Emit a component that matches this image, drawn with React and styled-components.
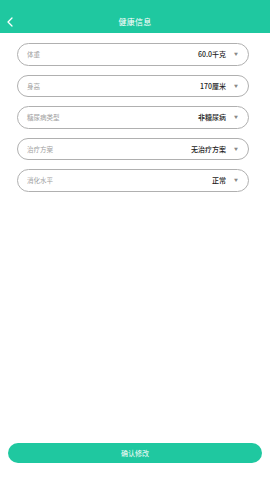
import styled, { createGlobalStyle } from "styled-components";

const fields = [
  { label: "体重", value: "60.0千克" },
  { label: "身高", value: "170厘米" },
  { label: "糖尿病类型", value: "非糖尿病" },
  { label: "治疗方案", value: "无治疗方案" },
  { label: "消化水平", value: "正常" },
];

function App() {
  return (
    <>
      <GlobalStyle />
      <Page>
        <Header>
          <Back aria-label="back">
            <svg width="8" height="10" viewBox="0 0 8 10">
              <path d="M6 1 L2 5 L6 9" fill="none" stroke="#fff" strokeWidth="1.3" strokeLinecap="round" strokeLinejoin="round" />
            </svg>
          </Back>
          <Title>健康信息</Title>
        </Header>
        <Form>
          {fields.map((f) => (
            <Field key={f.label}>
              <Label>{f.label}</Label>
              <Value>{f.value}</Value>
              <Caret>▼</Caret>
            </Field>
          ))}
        </Form>
        <Footer>
          <Submit>确认修改</Submit>
        </Footer>
      </Page>
    </>
  );
}

const GlobalStyle = createGlobalStyle`
  html, body {
    margin: 0;
    padding: 0;
    background: #fff;
    font-family: "Noto Sans CJK SC", "Noto Sans", sans-serif;
  }
`;
const Page = styled.div`
  width: 270px;
  height: 480px;
  display: flex;
  flex-direction: column;
  background: #fff;
`;
const Header = styled.div`
  height: 33px;
  background: #1fc8a0;
  position: relative;
  display: flex;
  align-items: center;
  justify-content: center;
  padding-top: 10px;
  box-sizing: border-box;
`;
const Back = styled.div`
  position: absolute;
  left: 6px;
  top: 17px;
  display: flex;
`;
const Title = styled.div`
  color: #fff;
  font-size: 8px;
  font-weight: 400;
  letter-spacing: 0.3px;
`;
const Form = styled.div`
  display: flex;
  flex-direction: column;
  gap: 9px;
  padding: 10px 21px 0 17px;
`;
const Field = styled.div`
  height: 22.5px;
  box-sizing: border-box;
  border: 1px solid #b0b0b0;
  border-radius: 12px;
  display: flex;
  align-items: center;
  padding: 0 10px 0 9px;
`;
const Label = styled.span`
  flex: 1;
  font-size: 6.5px;
  color: #a0a0a0;
`;
const Value = styled.span`
  font-size: 7px;
  font-weight: 500;
  color: #222;
`;
const Caret = styled.span`
  font-size: 4px;
  color: #888;
  margin-left: 8px;
`;
const Footer = styled.div`
  margin-top: auto;
  padding: 0 8px 17px;
`;
const Submit = styled.button`
  width: 100%;
  height: 20px;
  border: none;
  border-radius: 10px;
  background: #1fc8a0;
  color: #fff;
  font-family: inherit;
  font-size: 7px;
  font-weight: 400;
  padding: 0;
`;

export default App;
